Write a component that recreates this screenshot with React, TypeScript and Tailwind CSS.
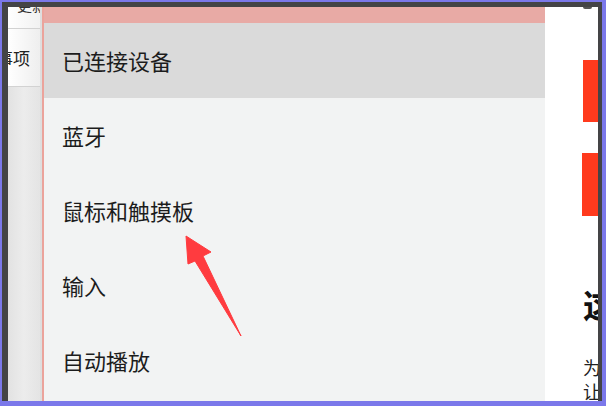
const items = ["已连接设备", "蓝牙", "鼠标和触摸板", "输入", "自动播放"];

const font = { fontFamily: '"Noto Sans CJK SC", "Noto Sans", sans-serif' };

function Arrow() {
  return (
    <svg
      className="pointer-events-none absolute left-0 top-0"
      width="606"
      height="406"
      viewBox="0 0 606 406"
    >
      <polygon
        points="186,236 211,252 203,256 241,336 195,261 188,264"
        fill="#ff3b3f"
        stroke="#ff3b3f"
        strokeWidth="1"
        strokeLinejoin="round"
      />
    </svg>
  );
}

export default function App() {
  return (
    <div className="relative h-[406px] w-[606px] overflow-hidden bg-[#7b78ea] pb-[5px] pl-[2px] pr-[4px] pt-[2px]" style={font}>
      <div className="flex h-full w-full bg-[#444446] pl-[6px] pr-[4px] pt-[5px]">
        {/* left strip */}
        <div className="flex h-full w-[34px] flex-col overflow-hidden border-r-2 border-[#dedede]">
          <div className="h-[22px] shrink-0 overflow-hidden border-b border-[#d2d2d2] bg-gradient-to-r from-white to-[#f1f1f1]">
            <div className="-mt-[13px] whitespace-nowrap pl-[9px] text-[15px] text-[#333]">更新</div>
          </div>
          <div className="flex h-[58px] shrink-0 items-center justify-end overflow-hidden border-b border-[#d2d2d2] bg-gradient-to-r from-white to-[#eeeeee] pr-[2px]">
            <span className="mr-[8px] whitespace-nowrap text-[17px] text-[#222]">注意事项</span>
          </div>
          <div className="flex-1 bg-gradient-to-r from-[#e2e2e2] via-[#ececec] to-[#e4e4e4]" />
        </div>
        <div className="h-full w-[2px] bg-[#eba39b]" />

        {/* main list */}
        <div className="flex h-full w-[501px] flex-col overflow-hidden bg-[#f2f3f3]">
          <div className="h-[16px] shrink-0 bg-[#e8aaa5]" />
          {items.map((t, i) => (
            <div
              key={t}
              className={
                i === 0
                  ? "flex h-[75px] shrink-0 items-center bg-[#dadada] pl-[18px] text-[22px] text-[#1c1c1c]"
                  : "flex h-[75px] shrink-0 items-center pl-[18px] text-[22px] text-[#1c1c1c]"
              }
            >
              {t}
            </div>
          ))}
        </div>

        {/* right panel */}
        <div className="flex h-full flex-1 flex-col overflow-hidden bg-white">
          <div className="flex shrink-0 justify-end pr-[6px]">
            <div className="h-[2px] w-[9px] rounded-b bg-[#555]" />
          </div>
          <div className="ml-[38px] mt-[51px] h-[62px] shrink-0 bg-[#ff3a1d]" />
          <div className="ml-[37px] mt-[31px] h-[63px] shrink-0 bg-[#ff3a1d]" />
          <div className="ml-[38px] mt-[68px] shrink-0 whitespace-nowrap text-[33px] font-bold leading-[40px] text-[#111]">这里</div>
          <div className="ml-[38px] mt-[31px] shrink-0 whitespace-nowrap text-[18px] leading-[24px] text-[#222]">为设备</div>
          <div className="ml-[38px] shrink-0 whitespace-nowrap text-[18px] leading-[24px] text-[#222]">让设备</div>
        </div>
      </div>
      <Arrow />
    </div>
  );
}
